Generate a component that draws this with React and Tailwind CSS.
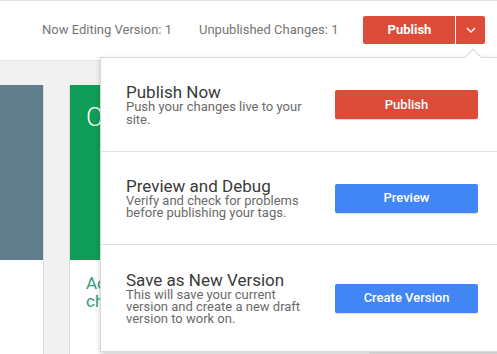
import React from "react";

function Section({ title, lines, btn, color, h }) {
  return (
    <div className={`flex items-center ${h} border-b border-[#e0e0e0] last:border-b-0`}>
      <div className="w-[234px] pl-[25px]">
        <div className="text-[17px] leading-[18px] text-[#3a3a3a]">{title}</div>
        <div className="text-[13px] leading-[12.3px] text-[#6a6a6a]">
          {lines.map((l, i) => (
            <div key={i}>{l}</div>
          ))}
        </div>
      </div>
      <button
        className={`w-[143px] h-[29px] rounded-[2px] ${color} text-white text-[13px] font-medium shadow-[0_1px_1px_rgba(0,0,0,0.15)]`}
      >
        {btn}
      </button>
    </div>
  );
}

export default function App() {
  return (
    <div
      className="relative w-[497px] h-[354px] overflow-hidden bg-[#f1f1f1]"
      style={{ fontFamily: "Roboto, 'Liberation Sans', sans-serif" }}
    >
      {/* header */}
      <div className="h-[61px] bg-white border-t border-[#e3e3e3] border-b border-[#dedede] flex items-start">
        <div className="flex items-center pt-[15px] pl-[42px]">
          <span className="text-[13px] text-[#757575]">Now Editing Version: 1</span>
          <span className="text-[13px] text-[#757575] ml-[27px]">Unpublished Changes: 1</span>
          <div className="flex ml-[25px] gap-px">
            <button className="w-[92px] h-[28px] bg-[#dd4b39] text-white text-[13px] font-bold rounded-l-[2px]">
              Publish
            </button>
            <button className="w-[29px] h-[28px] bg-[#dd4b39] rounded-r-[2px] flex items-center justify-center">
              <svg width="10" height="6" viewBox="0 0 10 6">
                <path d="M1 1l4 4 4-4" fill="none" stroke="white" strokeWidth="1.4" />
              </svg>
            </button>
          </div>
        </div>
      </div>

      {/* body cards */}
      <div className="flex gap-[25px] pt-[24px] h-[293px]">
        <div className="w-[44px] shrink-0 flex flex-col border-r border-[#dcdcdc] bg-white">
          <div className="h-[175px] bg-[#607d8b]" />
          <div className="flex-1 bg-white" />
        </div>
        <div className="w-[300px] shrink-0 flex flex-col border-l border-[#dcdcdc] bg-white">
          <div className="h-[175px] bg-[#0f9d58] pl-[16px] pt-[17px]">
            <div className="text-[26px] leading-[30px] font-light text-white">C</div>
          </div>
          <div className="flex-1 bg-white pl-[16px] pt-[14px] text-[17px] leading-[18px] text-[#2e9e78]">
            <div>Ac</div>
            <div>ch</div>
          </div>
        </div>
      </div>

      {/* popover */}
      <div className="absolute left-[100px] top-[57px] w-[402px] h-[295px] bg-white border border-[#d9d9d9] shadow-[0_2px_5px_rgba(0,0,0,0.2)]">
        <div className="absolute -top-[7px] left-[366px] w-[12px] h-[12px] bg-white border-t border-l border-[#d9d9d9] rotate-45" />
        <div className="relative flex flex-col">
          <Section
            title="Publish Now"
            lines={["Push your changes live to your", "site."]}
            btn="Publish"
            color="bg-[#dd4b39]"
            h="h-[94px]"
          />
          <Section
            title="Preview and Debug"
            lines={["Verify and check for problems", "before publishing your tags."]}
            btn="Preview"
            color="bg-[#4285f4]"
            h="h-[93px]"
          />
          <Section
            title="Save as New Version"
            lines={["This will save your current", "version and create a new draft", "version to work on."]}
            btn="Create Version"
            color="bg-[#4285f4]"
            h="h-[106px]"
          />
        </div>
      </div>
    </div>
  );
}
